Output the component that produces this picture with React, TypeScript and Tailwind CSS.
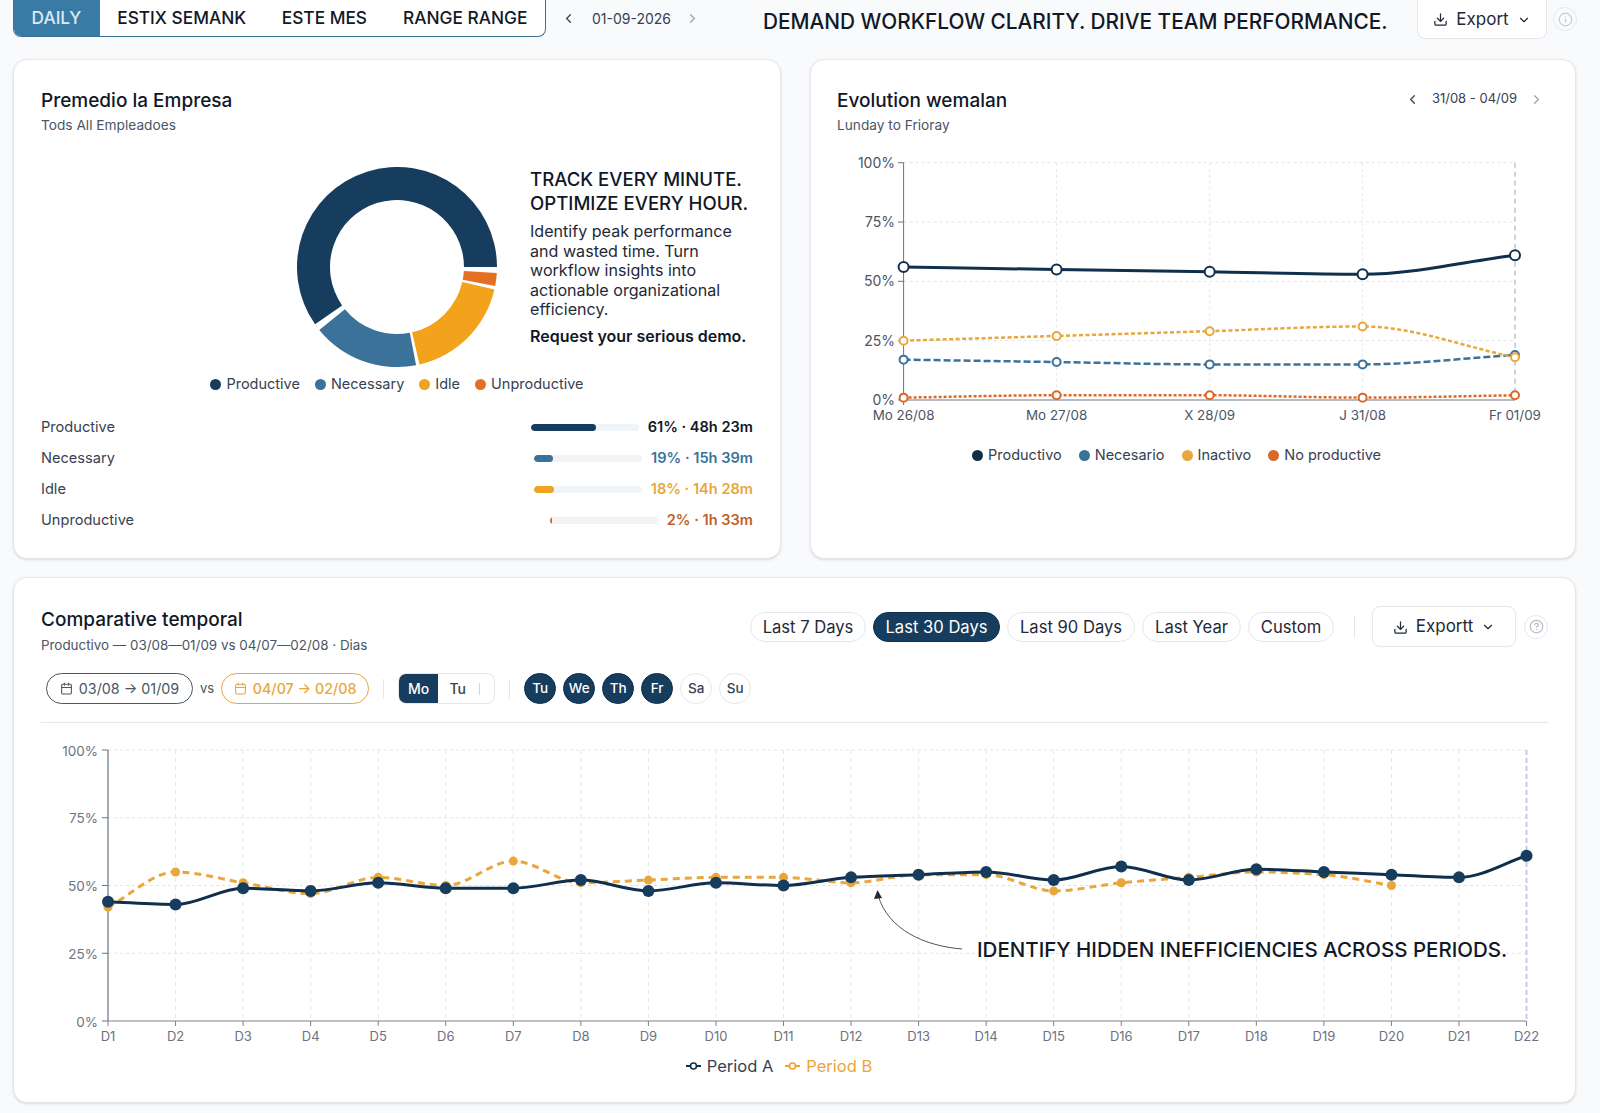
import React from 'react';
import { Calendar, ChevronDown, ChevronLeft, ChevronRight, CircleHelp, Download, Info } from 'lucide-react';

const NAVY = '#0f2f4d';
const DEEP = '#163c5e';
const BLUE = '#3b7299';
const AMBER = '#e9a63a';
const ORANGE = '#d9682a';

// monotone cubic, same look as the recharts lines
const linePath = (pts: [number, number][]) => {
  const n = pts.length;
  const dx: number[] = [];
  const m: number[] = [];
  for (let i = 0; i < n - 1; i++) {
    dx[i] = pts[i + 1][0] - pts[i][0];
    m[i] = (pts[i + 1][1] - pts[i][1]) / dx[i];
  }
  const t: number[] = [m[0]];
  for (let i = 1; i < n - 1; i++) {
    t[i] = m[i - 1] * m[i] <= 0 ? 0 : (2 * m[i - 1] * m[i]) / (m[i - 1] + m[i]);
  }
  t[n - 1] = m[n - 2];
  let d = `M${pts[0][0]} ${pts[0][1]}`;
  for (let i = 0; i < n - 1; i++) {
    const h = dx[i] / 3;
    d += ` C${pts[i][0] + h} ${pts[i][1] + t[i] * h} ${pts[i + 1][0] - h} ${pts[i + 1][1] - t[i + 1] * h} ${pts[i + 1][0]} ${pts[i + 1][1]}`;
  }
  return d;
};

const arc = (cx: number, cy: number, r0: number, r1: number, a0: number, a1: number) => {
  const p = (r: number, a: number) => {
    const rad = (a * Math.PI) / 180;
    return `${cx + r * Math.sin(rad)} ${cy - r * Math.cos(rad)}`;
  };
  const large = a1 - a0 > 180 ? 1 : 0;
  return `M${p(r1, a0)} A${r1} ${r1} 0 ${large} 1 ${p(r1, a1)} L${p(r0, a1)} A${r0} ${r0} 0 ${large} 0 ${p(r0, a0)} Z`;
};

const Donut = () => (
  <svg width="200" height="200" viewBox="0 0 200 200" className="shrink-0">
    <path d={arc(100, 100, 67, 100, 235, 450)} fill={DEEP} />
    <path d={arc(100, 100, 67, 100, 93.5, 101)} fill="#e36f22" />
    <path d={arc(100, 100, 67, 100, 103, 167)} fill="#f2a31b" />
    <path d={arc(100, 100, 67, 100, 169, 231)} fill={BLUE} />
  </svg>
);

const weekX = [903.6, 1056.6, 1209.7, 1362.6, 1515];
const weekY = (v: number) => 400 - (v / 100) * 237.3;
const weekSeries = [
  { color: ORANGE, dash: '3 2', w: 2.5, data: [1, 2, 2, 1, 2], r: 4 },
  { color: BLUE, dash: '7 3', w: 2.5, data: [17, 16, 15, 15, 19], r: 4 },
  { color: AMBER, dash: '4 2.5', w: 2.5, data: [25, 27, 29, 31, 18], r: 4 },
  { color: NAVY, dash: undefined, w: 3, data: [56, 55, 54, 53, 61], r: 5 },
];
const weekLabels = ['Mo 26/08', 'Mo 27/08', 'X 28/09', 'J 31/08', 'Fr 01/09'];

const WeekChart = () => (
  <svg width="764" height="275" viewBox="811 150 764 275" className="block mt-[15px]">
    {[100, 75, 50, 25].map(v => (
      <line key={v} x1={903.6} x2={1515} y1={weekY(v)} y2={weekY(v)} stroke="#dfe3e8" strokeDasharray="3 3" />
    ))}
    {weekX.slice(1, 4).map(x => (
      <line key={x} x1={x} x2={x} y1={162.7} y2={400} stroke="#e5e7eb" strokeDasharray="3 3" />
    ))}
    <line x1={1515} x2={1515} y1={162.7} y2={400} stroke="#9ca3af" strokeDasharray="5 4" />
    <line x1={903.6} x2={903.6} y1={162.7} y2={405} stroke="#6b7280" />
    <line x1={903.6} x2={1515} y1={400} y2={400} stroke="#9ca3af" strokeWidth="1.5" />
    {[100, 75, 50, 25, 0].map(v => (
      <g key={v}>
        <line x1={898} x2={903.6} y1={weekY(v)} y2={weekY(v)} stroke="#6b7280" />
        <text x={895} y={weekY(v) + 5} textAnchor="end" fontSize="14" fill="#4b5563">{v}%</text>
      </g>
    ))}
    {weekLabels.map((l, i) => (
      <text key={l} x={weekX[i]} y={420} textAnchor="middle" fontSize="13.4" fill="#4b5563">{l}</text>
    ))}
    {weekSeries.map(s => (
      <g key={s.color}>
        <path
          d={linePath(s.data.map((v, i) => [weekX[i], weekY(v)] as [number, number]))}
          fill="none"
          stroke={s.color}
          strokeWidth={s.w}
          strokeDasharray={s.dash}
        />
        {s.data.map((v, i) => (
          <circle key={i} cx={weekX[i]} cy={weekY(v)} r={s.r} fill="#fff" stroke={s.color} strokeWidth="2" />
        ))}
      </g>
    ))}
  </svg>
);

const compareA = [44, 43, 49, 48, 51, 49, 49, 52, 48, 51, 50, 53, 54, 55, 52, 57, 52, 56, 55, 54, 53, 61];
const compareB = [42, 55, 51, 47, 53, 50, 59, 51, 52, 53, 53, 51, 54, 54, 48, 51, 53, 55, 54, 50];
const compX = (i: number) => 108 + i * 67.55;
const compY = (v: number) => 1021 - (v / 100) * 271;

const CompareChart = () => (
  <svg width="1561" height="325" viewBox="14 723 1561 325" className="block -mx-[27px]">
    {[100, 75, 50, 25].map(v => (
      <line key={v} x1={108} x2={1526.5} y1={compY(v)} y2={compY(v)} stroke="#dfe3e8" strokeDasharray="3 3" />
    ))}
    {compareA.slice(1, 21).map((_, i) => (
      <line key={i} x1={compX(i + 1)} x2={compX(i + 1)} y1={750} y2={1021} stroke="#e5e7eb" strokeDasharray="4 4" />
    ))}
    <line x1={1526.5} x2={1526.5} y1={750} y2={1021} stroke="#c3cfe0" strokeWidth="2" strokeDasharray="5 3" />
    <line x1={108} x2={108} y1={750} y2={1021} stroke="#6b7280" strokeWidth="1.2" />
    <line x1={108} x2={1526.5} y1={1021} y2={1021} stroke="#7b8390" strokeWidth="1.2" />
    {[100, 75, 50, 25, 0].map(v => (
      <g key={v}>
        <line x1={102} x2={108} y1={compY(v)} y2={compY(v)} stroke="#6b7280" />
        <text x={98} y={compY(v) + 5.5} textAnchor="end" fontSize="13.5" fill="#6b7280">{v}%</text>
      </g>
    ))}
    {compareA.map((_, i) => (
      <g key={i}>
        <line x1={compX(i)} x2={compX(i)} y1={1021} y2={1026} stroke="#7b8390" />
        <text x={compX(i)} y={1041} textAnchor="middle" fontSize="13" fill="#6b7280">D{i + 1}</text>
      </g>
    ))}
    <path
      d={linePath(compareB.map((v, i) => [compX(i), compY(v)] as [number, number]))}
      fill="none"
      stroke={AMBER}
      strokeWidth="3"
      strokeDasharray="7 5"
    />
    {compareB.map((v, i) => (
      <circle key={i} cx={compX(i)} cy={compY(v)} r="4.5" fill={AMBER} />
    ))}
    <path
      d={linePath(compareA.map((v, i) => [compX(i), compY(v)] as [number, number]))}
      fill="none"
      stroke={NAVY}
      strokeWidth="3"
    />
    {compareA.map((v, i) => (
      <circle key={i} cx={compX(i)} cy={compY(v)} r="6" fill={DEEP} />
    ))}
    <path d="M962 949 C925 946 888 930 878 895" fill="none" stroke="#4b5563" strokeWidth="1" />
    <path d="M877.5 890 L874 899 L882 898 Z" fill="#1f2937" />
  </svg>
);

const Dot = ({ color, label }: { color: string; label: string }) => (
  <span className="flex items-center gap-[5px]">
    <span className="w-[11px] h-[11px] rounded-full" style={{ backgroundColor: color }} />
    <span className="text-[#374151]">{label}</span>
  </span>
);

const rows = [
  { label: 'Productive', fill: 'w-[65px] bg-[#163c5e]', value: '61% · 48h 23m', text: 'text-[#111827]' },
  { label: 'Necessary', fill: 'w-[19px] bg-[#3b7299]', value: '19% · 15h 39m', text: 'text-[#3b7299]' },
  { label: 'Idle', fill: 'w-[20px] bg-[#eea524]', value: '18% · 14h 28m', text: 'text-[#e9a63a]' },
  { label: 'Unproductive', fill: 'w-[2px] bg-[#d9682a]', value: '2% · 1h 33m', text: 'text-[#bf5f2b]' },
];

const ranges = [
  { label: 'Last 7 Days', w: 'w-[116px]' },
  { label: 'Last 30 Days', w: 'w-[127px]' },
  { label: 'Last 90 Days', w: 'w-[128px]' },
  { label: 'Last Year', w: 'w-[99px]' },
  { label: 'Custom', w: 'w-[86px]' },
];
const days = [
  { d: 'Tu', on: true },
  { d: 'We', on: true },
  { d: 'Th', on: true },
  { d: 'Fr', on: true },
  { d: 'Sa', on: false },
  { d: 'Su', on: false },
];

const App: React.FC = () => {
  return (
    <div className="min-h-screen bg-[#f8fafc] pl-[13px] pr-[24px] pb-[10px] font-[Inter,sans-serif] text-[#111827]">
      {/* top bar */}
      <div className="flex items-start h-[39px] mb-[20px]">
        <div className="flex shrink-0 h-[37px] w-[533px] bg-white border border-[#3b7299] border-t-0 rounded-b-lg overflow-hidden text-[17.3px] font-medium">
          <div className="w-[87px] -ml-px flex items-center justify-center bg-[#3a7ba6] text-[#dceaf4]">DAILY</div>
          <div className="w-[164px] flex items-center justify-center">ESTIX SEMANK</div>
          <div className="w-[122px] flex items-center justify-center">ESTE MES</div>
          <div className="w-[160px] flex items-center justify-center">RANGE RANGE</div>
        </div>
        <div className="flex shrink-0 items-center h-[37px] ml-[15px] text-[14px] text-[#374151]">
          <ChevronLeft size={15} className="text-[#374151]" />
          <span className="ml-[16px] w-[78px] whitespace-nowrap">01-09-2026</span>
          <ChevronRight size={15} className="ml-[15px] text-[#9ca3af]" />
        </div>
        <div className="ml-[63px] h-[44px] flex items-center text-[20.8px] font-medium whitespace-nowrap w-[654px] shrink-0">
          DEMAND WORKFLOW CLARITY. DRIVE TEAM PERFORMANCE.
        </div>
        <div className="flex shrink-0 items-center justify-center gap-[8px] w-[130px] h-[39px] pt-px bg-white border border-[#e5e7eb] border-t-0 rounded-b-lg text-[17px] text-[#1f2937]">
          <Download size={15} />
          Export
          <ChevronDown size={14} />
        </div>
        <div className="ml-[6px] mt-[7px] w-[24px] h-[24px] shrink-0 rounded-full border border-[#e5e7eb] flex items-center justify-center">
          <Info size={15} className="text-[#c7ccd4]" />
        </div>
      </div>

      <div className="grid grid-cols-[768px_766px] gap-x-[29px]">
        {/* company donut card */}
        <div className="h-[500px] bg-white border border-[#e5e7eb] rounded-[14px] shadow-sm px-[27px] pt-[27px]">
          <h2 className="text-[19px] leading-[28px] font-medium">Premedio la Empresa</h2>
          <p className="text-[13.7px] leading-[20px] text-[#4b5563]">Tods All Empleadoes</p>
          <div className="flex mt-[32px] ml-[256px]">
            <Donut />
            <div className="ml-[33px] pt-[1px] w-[225px] shrink-0">
              <div className="text-[18.6px] leading-[23.5px] font-medium whitespace-nowrap">
                TRACK EVERY MINUTE.
                <br />
                OPTIMIZE EVERY HOUR.
              </div>
              <p className="mt-[7px] text-[16.1px] leading-[19.5px] text-[#1f2937]">
                Identify peak performance and wasted time. Turn workflow insights into actionable organizational efficiency.
              </p>
              <p className="mt-[6px] text-[16px] leading-[20px] font-semibold whitespace-nowrap">Request your serious demo.</p>
            </div>
          </div>
          <div className="flex justify-center gap-[15px] mt-[7px] h-[20px] text-[14.5px] leading-[20px]">
            <Dot color={DEEP} label="Productive" />
            <Dot color={BLUE} label="Necessary" />
            <Dot color="#f2a31b" label="Idle" />
            <Dot color="#e36f22" label="Unproductive" />
          </div>
          <div className="mt-[18px]">
            {rows.map(r => (
              <div key={r.label} className="flex items-center justify-between h-[31px] text-[14.6px]">
                <span className="text-[#374151]">{r.label}</span>
                <div className="flex items-center gap-[9px]">
                  <div className="w-[108px] h-[7px] rounded-full bg-[#f1f4f7] overflow-hidden">
                    <div className={`h-full rounded-full ${r.fill}`} />
                  </div>
                  <span className={`font-semibold ${r.text}`}>{r.value}</span>
                </div>
              </div>
            ))}
          </div>
        </div>

        {/* weekly evolution card */}
        <div className="h-[500px] bg-white border border-[#e5e7eb] rounded-[14px] shadow-sm pt-[27px]">
          <div className="flex justify-between px-[26px]">
            <div>
              <h2 className="text-[19px] leading-[28px] font-medium">Evolution wemalan</h2>
              <p className="text-[13.7px] leading-[20px] text-[#4b5563]">Lunday to Frioray</p>
            </div>
            <div className="flex items-center h-[24px] mr-[5px] text-[13px] text-[#374151]">
              <ChevronLeft size={15} />
              <span className="mx-[12px]">31/08 - 04/09</span>
              <ChevronRight size={15} className="text-[#9ca3af]" />
            </div>
          </div>
          <WeekChart />
          <div className="flex justify-center gap-[17px] mt-[20px] h-[20px] text-[14.5px] leading-[20px] -ml-[33px]">
            <Dot color={NAVY} label="Productivo" />
            <Dot color={BLUE} label="Necesario" />
            <Dot color={AMBER} label="Inactivo" />
            <Dot color={ORANGE} label="No productive" />
          </div>
        </div>

        {/* period comparison card */}
        <div className="relative col-span-2 mt-[18px] h-[526px] bg-white border border-[#e5e7eb] rounded-[14px] shadow-sm px-[27px] pt-[28px]">
          <div className="flex justify-between items-start">
            <div>
              <h2 className="text-[19px] leading-[28px] font-medium">Comparative temporal</h2>
              <p className="mt-px text-[13.4px] leading-[20px] text-[#4b5563]">Productivo — 03/08—01/09 vs 04/07—02/08 · Dias</p>
            </div>
            <div className="flex items-center h-[41px]">
              <div className="flex items-center gap-[7px]">
                {ranges.map(r => (
                  <span
                    key={r.label}
                    className={`h-[30px] pt-px flex items-center justify-center rounded-full border text-[16.6px] ${r.w} ${
                      r.label === 'Last 30 Days' ? 'bg-[#163c5e] border-[#0f2f4d] text-white' : 'bg-white border-[#e5e7eb] text-[#1f2937]'
                    }`}
                  >
                    {r.label}
                  </span>
                ))}
              </div>
              <div className="w-px h-[22px] bg-[#e5e7eb] ml-[20px] mr-[17px]" />
              <div className="flex items-center justify-center gap-[8px] w-[144px] h-[41px] pt-px bg-white border border-[#e5e7eb] rounded-lg text-[17px] text-[#1f2937]">
                <Download size={15} />
                Exportt
                <ChevronDown size={14} />
              </div>
              <div className="ml-[8px] w-[24px] h-[24px] rounded-full border border-[#e5e7eb] flex items-center justify-center">
                <CircleHelp size={15} className="text-[#b6bcc6]" />
              </div>
            </div>
          </div>

          <div className="flex items-center mt-[18px] h-[31px] ml-[5px] text-[14.3px]">
            <div className="flex items-center justify-center gap-[6px] w-[147px] h-[31px] rounded-full border border-[#4b5563] text-[#4b5563] whitespace-nowrap">
              <Calendar size={13} />
              03/08 → 01/09
            </div>
            <span className="mx-[7px] text-[#4b5563] text-[13px]">vs</span>
            <div className="flex items-center justify-center gap-[6px] w-[148px] h-[31px] rounded-full border border-[#e9a63a] text-[#e9a63a] font-medium whitespace-nowrap">
              <Calendar size={13} />
              04/07 → 02/08
            </div>
            <div className="w-px h-[20px] bg-[#e5e7eb] mx-[14px]" />
            <div className="flex h-[31px] w-[97px] rounded-lg border border-[#e5e7eb] overflow-hidden text-[14px] font-medium">
              <span className="w-[39px] flex items-center justify-center bg-[#163c5e] text-white">Mo</span>
              <span className="w-[39px] flex items-center justify-center text-[#374151]">Tu</span>
              <span className="w-px h-[12px] bg-[#d1d5db] self-center ml-[2px]" />
            </div>
            <div className="w-px h-[20px] bg-[#e5e7eb] mx-[14px]" />
            <div className="flex gap-[7px] text-[13.5px] font-medium">
              {days.map(x => (
                <span
                  key={x.d}
                  className={`w-[32px] h-[31px] rounded-full flex items-center justify-center border ${
                    x.on ? 'bg-[#163c5e] border-[#0f2f4d] text-white' : 'bg-white border-[#e5e7eb] text-[#374151]'
                  }`}
                >
                  {x.d}
                </span>
              ))}
            </div>
          </div>

          <div className="h-px bg-[#e5e7eb] mt-[18px]" />
          <CompareChart />
          <span className="absolute left-[963px] top-[355px] text-[20.5px] leading-[34px] font-medium whitespace-nowrap">
            IDENTIFY HIDDEN INEFFICIENCIES ACROSS PERIODS.
          </span>

          <div className="flex justify-center items-center gap-[12px] mt-[8px] h-[20px] text-[16.5px] leading-[20px] ml-[-31px]">
            <span className="flex items-center gap-[6px] text-[#374151]">
              <svg width="15" height="10" viewBox="0 0 15 10">
                <line x1="0" x2="15" y1="5" y2="5" stroke={NAVY} strokeWidth="2" />
                <circle cx="7.5" cy="5" r="3" fill="#fff" stroke={NAVY} strokeWidth="1.6" />
              </svg>
              Period A
            </span>
            <span className="flex items-center gap-[6px] text-[#e9a63a]">
              <svg width="15" height="10" viewBox="0 0 15 10">
                <line x1="0" x2="15" y1="5" y2="5" stroke="#eea524" strokeWidth="2" />
                <circle cx="7.5" cy="5" r="3" fill="#fff" stroke="#eea524" strokeWidth="1.6" />
              </svg>
              Period B
            </span>
          </div>
        </div>
      </div>
    </div>
  );
};

export default App;
